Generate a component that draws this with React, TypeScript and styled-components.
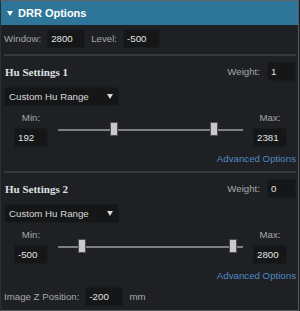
import styled, { createGlobalStyle } from 'styled-components';

const GlobalStyle = createGlobalStyle`
  html, body {
    margin: 0;
    padding: 0;
    background: #1f2023;
  }
  * {
    box-sizing: border-box;
  }
`;

const TRACK_MIN = -937;
const TRACK_SCALE = 0.04576;

type HuSection = {
  title: string;
  weight: string;
  min: number;
  max: number;
};

const sections: HuSection[] = [
  { title: 'Hu Settings 1', weight: '1', min: 192, max: 2381 },
  { title: 'Hu Settings 2', weight: '0', min: -500, max: 2800 },
];

function thumbLeft(value: number) {
  return Math.round(TRACK_SCALE * (value - TRACK_MIN));
}

function App() {
  return (
    <>
      <GlobalStyle />
      <StyledPanel>
        <StyledHeader>
          <svg width="6" height="5" viewBox="0 0 6 5">
            <polygon points="0,0 6,0 3,5" fill="#ffffff" />
          </svg>
          <span>DRR Options</span>
        </StyledHeader>
        <StyledBody>
          <StyledRow $top={4}>
            <StyledLabel>Window:</StyledLabel>
            <StyledInput $width={38} defaultValue="2800" />
            <StyledLabel>Level:</StyledLabel>
            <StyledInput $width={37} defaultValue="-500" />
          </StyledRow>
          {sections.map((s) => (
            <StyledSection key={s.title}>
              <StyledHeadingRow>
                <h4>{s.title}</h4>
                <StyledWeight>
                  <StyledLabel>Weight:</StyledLabel>
                  <StyledInput $width={29} defaultValue={s.weight} />
                </StyledWeight>
              </StyledHeadingRow>
              <StyledSelect>
                <span>Custom Hu Range</span>
                <svg width="6" height="5" viewBox="0 0 6 5">
                  <polygon points="0,0 6,0 3,5" fill="#d8d8d8" />
                </svg>
              </StyledSelect>
              <StyledRangeRow>
                <StyledRangeField>
                  <StyledLabel>Min:</StyledLabel>
                  <StyledInput $width={34} defaultValue={String(s.min)} />
                </StyledRangeField>
                <StyledTrack>
                  <StyledThumb style={{ left: thumbLeft(s.min) }} />
                  <StyledThumb style={{ left: thumbLeft(s.max) }} />
                </StyledTrack>
                <StyledRangeField>
                  <StyledLabel>Max:</StyledLabel>
                  <StyledInput $width={34} defaultValue={String(s.max)} />
                </StyledRangeField>
              </StyledRangeRow>
              <StyledLink href="#">Advanced Options</StyledLink>
            </StyledSection>
          ))}
          <StyledRow $top={5}>
            <StyledLabel>Image Z Position:</StyledLabel>
            <StyledInput $width={38} defaultValue="-200" />
            <StyledLabel>mm</StyledLabel>
          </StyledRow>
        </StyledBody>
      </StyledPanel>
    </>
  );
}

const StyledPanel = styled.div`
  width: 299px;
  height: 311px;
  background: #1f2023;
  border-top: 1px solid #5c6166;
  border-left: 1px solid #2c2f32;
  border-right: 1px solid #55595d;
  border-bottom: 1px solid #55595d;
  font-family: 'Liberation Sans', Arial, sans-serif;
  font-size: 9.7px;
  overflow: hidden;
`;

const StyledHeader = styled.div`
  height: 24px;
  background: #2d7699;
  display: flex;
  align-items: center;
  gap: 5px;
  padding-left: 6px;
  color: #ffffff;
  font-size: 11px;
  font-weight: 700;
`;

const StyledBody = styled.div`
  padding: 0 2px 0 3px;
`;

const StyledRow = styled.div<{ $top: number }>`
  display: flex;
  align-items: center;
  gap: 6px;
  height: 19px;
  margin-top: ${(p) => p.$top}px;
`;

const StyledLabel = styled.span`
  color: #a3a8ad;
  font-size: 9.7px;
  line-height: 12px;
`;

const StyledInput = styled.input<{ $width: number }>`
  width: ${(p) => p.$width}px;
  height: 19px;
  margin: 0;
  padding: 0 0 0 3px;
  background: #151618;
  border: 1px solid #1a1b1d;
  color: #e2e2e2;
  font-family: 'Liberation Sans', Arial, sans-serif;
  font-size: 9.7px;
  outline: none;
`;

const StyledSection = styled.section`
  margin-top: 6px;
  padding-top: 6px;
  border-top: 2px solid #37393c;
  display: flex;
  flex-direction: column;
`;

const StyledHeadingRow = styled.div`
  display: flex;
  align-items: center;
  justify-content: space-between;
  height: 19px;

  & > h4 {
    margin: 0;
    padding-left: 1px;
    font-family: 'Liberation Serif', 'Times New Roman', serif;
    font-size: 11px;
    font-weight: 700;
    color: #dde1e5;
  }
`;

const StyledWeight = styled.div`
  display: flex;
  align-items: center;
  gap: 7px;
`;

const StyledSelect = styled.div`
  margin-top: 6px;
  width: 115px;
  height: 19px;
  padding: 0 5px 0 4px;
  display: flex;
  align-items: center;
  justify-content: space-between;
  background: #151618;
  border: 1px solid #1a1b1d;
  color: #d8d8d8;
  font-size: 9.7px;
`;

const StyledRangeRow = styled.div`
  margin-top: 6px;
  display: flex;
  align-items: center;
  padding: 0 9px 0 10px;
  gap: 10px;
`;

const StyledRangeField = styled.div`
  display: flex;
  flex-direction: column;
  align-items: center;
  gap: 4px;
`;

const StyledTrack = styled.div`
  position: relative;
  flex: 1;
  height: 2px;
  background: #7d8083;
  margin-top: 1px;
`;

const StyledThumb = styled.div`
  position: absolute;
  top: -7px;
  width: 8px;
  height: 14px;
  background: #c9c9c9;
  border: 1px solid #4d4f52;
`;

const StyledLink = styled.a`
  align-self: flex-end;
  margin-top: 6px;
  color: #4f8ac4;
  font-size: 9.7px;
  line-height: 12px;
  text-decoration: none;
`;

export default App;
